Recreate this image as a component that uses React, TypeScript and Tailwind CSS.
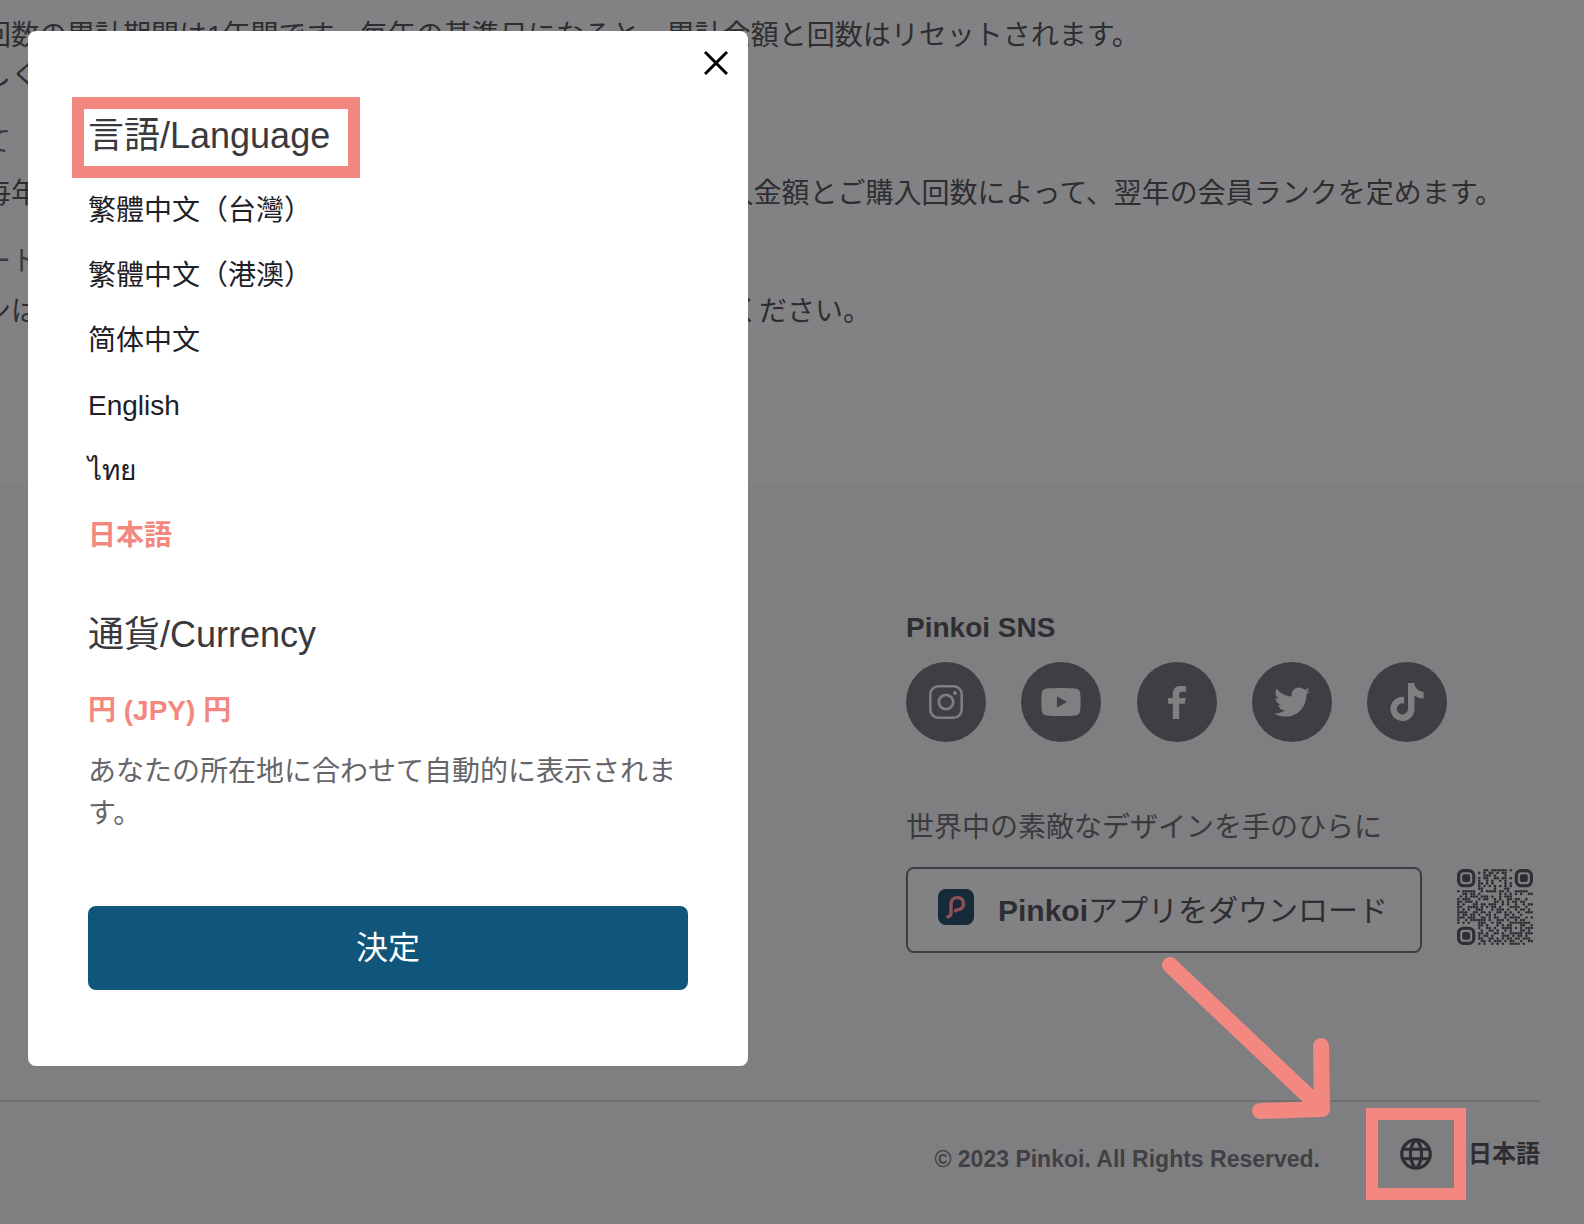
import { useState } from 'react';
import { FaTiktok, FaTwitter } from 'react-icons/fa6';
import { MdLanguage } from 'react-icons/md';

const languages = [
  { code: 'zh-TW', label: '繁體中文（台灣）' },
  { code: 'zh-HK', label: '繁體中文（港澳）' },
  { code: 'zh-CN', label: '简体中文' },
  { code: 'en', label: 'English' },
  { code: 'th', label: 'ไทย' },
  { code: 'ja', label: '日本語' },
];

// 29x29 modules, the three finder marks are drawn separately
const qrRows = [
  '..........##.######.#........',
  '........#.#.##.#.##..........',
  '..........###.#...#..........',
  '........#.##..##.##.#........',
  '........#..#.#..#.#..........',
  '........##.#.#....#.#........',
  '........#.#.#.#.#.#.#........',
  '........##....#...##.........',
  '#.#####..#.####.##.#..#####..',
  '..##.##.#.......#.#.#.#.#..##',
  '.#.#.###.###.#..#.###........',
  '#.###...#.##..#.#..##.##..#..',
  '##.###.#......##.#.#.##.##...',
  '#.#...##.##.###..#.#..#..#.##',
  '##..####.#.#.##.#...####..#..',
  '#.#.#..###...#.###.#..#.##.#.',
  '####..##.##.#..##.#.#..#..###',
  '#.##.##.#..##.#...##.#..#....',
  '###.###..##.#.##..#.####..#.#',
  '#..#.######.#..###.#..#.##...',
  '#.#.#...###..#.##...########.',
  '........##.#...#.#.##...##..#',
  '........#..##.#..####.#.#.###',
  '.........#..##.#..#.#...##.#.',
  '........##.#..##.#..#####.###',
  '........#.##.#...###.#.##.#..',
  '........##..##.#.#.##.##.###.',
  '.........##.#.###.#.##..#..##',
  '........#.#..#.#.#..####.#...',
];

function QrCode() {
  return (
    <svg viewBox="0 0 29 29" className="size-[76px] shrink-0" role="img" aria-label="QR">
      <g fill="#2e2e32">
        {qrRows.map((row, y) =>
          row.split('').map((cell, x) =>
            cell === '#' ? <circle key={`${x}-${y}`} cx={x + 0.5} cy={y + 0.5} r={0.5} /> : null
          )
        )}
      </g>
      {[[0, 0], [22, 0], [0, 22]].map(([x, y]) => (
        <g key={`${x}-${y}`}>
          <rect x={x + 0.6} y={y + 0.6} width="5.8" height="5.8" rx="1.9" fill="none" stroke="#2e2e32" strokeWidth="1.2" />
          <rect x={x + 2} y={y + 2} width="3" height="3" rx="0.8" fill="#2e2e32" />
        </g>
      ))}
    </svg>
  );
}

function InstagramIcon() {
  return (
    <svg viewBox="0 0 34 34" className="size-[34px]" fill="none" stroke="currentColor">
      <rect x="1.3" y="1.3" width="31.4" height="31.4" rx="8" strokeWidth="2.6" />
      <circle cx="17" cy="17" r="7.2" strokeWidth="2.8" />
      <circle cx="26" cy="8" r="2" fill="currentColor" stroke="none" />
    </svg>
  );
}

function YoutubeIcon() {
  return (
    <svg viewBox="0 0 40 28" className="h-7 w-10">
      <path
        fill="currentColor"
        fillRule="evenodd"
        d="M6 .6C14 -.1 26 -.1 34 .6c3.600.3 5 2 5.300 5.400.4 5.200.4 10.800 0 16-.3 3.400-1.700 5.100-5.300 5.400-8 .7-20 .7-28 0C2.400 27.100 1 25.400.7 22c-.4-5.200-.4-10.800 0-16C1 2.600 2.400.9 6 .6ZM16 8.500v11l10-5.500-10-5.500Z"
      />
    </svg>
  );
}

function FacebookIcon() {
  return (
    <svg viewBox="0 0 53 98" className="h-[33px] w-[18px]" fill="currentColor">
      <path d="M14 98V53H0V36h14V24C14 7 23 0 37 0h16v17H43c-7 0-10 2-10 9v10h19l-2 17H33v45Z" />
    </svg>
  );
}

function PinkoiLogo() {
  return (
    <svg viewBox="0 0 36 36" className="mb-1.5 size-9 shrink-0">
      <rect width="36" height="36" rx="8" fill="#172a3a" />
      <path
        d="M9.800 27.800c2.200-.5 3.200-1.900 3.200-4.400V15c0-3.800 2.600-6.400 6.300-6.400s6.200 2.500 6.200 6.100-2.500 6-5.900 6c-1 0-1.700.4-2 1.200"
        fill="none"
        stroke="#8f5254"
        strokeWidth="3.400"
        strokeLinecap="round"
      />
    </svg>
  );
}

const socials = [
  { name: 'Instagram', icon: <InstagramIcon /> },
  { name: 'YouTube', icon: <YoutubeIcon /> },
  { name: 'Facebook', icon: <FacebookIcon /> },
  { name: 'Twitter', icon: <FaTwitter className="size-9" /> },
  { name: 'TikTok', icon: <FaTiktok className="size-[38px]" /> },
];

function Article() {
  return (
    <main className="-ml-[17px] pt-4 pb-[150px] text-[28px] leading-10 whitespace-nowrap text-[#2e2e31]">
      <p>回数の累計期間は1年間です。毎年の基準日になると、累計金額と回数はリセットされます。</p>
      <p>しくはこちら</p>
      <h2 className="mt-[26px] text-[#3a3a3e]">て</h2>
      <p className="mt-3">
        毎年の基準日になると、その時点での過去1年間の累計ご購入金額とご購入回数によって、翌年の会員ランクを定めます。
      </p>
      <h2 className="mt-7 text-[#3a3a3e]">ートについて</h2>
      <p className="mt-[10px]">ンは、毎年1回更新されます。 詳しくは会員ページをご確認ください。</p>
    </main>
  );
}

function Footer() {
  return (
    <footer className="bg-[#7f7f81] pr-11 text-[#2e2e32]">
      <div className="flex justify-end pt-[126px] pb-[147px]">
        <div className="w-[634px]">
          <h3 className="text-[28px] leading-10 font-bold">Pinkoi SNS</h3>
          <div className="mt-[14px] flex max-w-[541px] justify-between">
            {socials.map((social) => (
              <a
                key={social.name}
                href="#"
                aria-label={social.name}
                className="flex size-20 items-center justify-center rounded-full bg-[#3f3e43] text-[#7f7f81]"
              >
                {social.icon}
              </a>
            ))}
          </div>
          <p className="mt-[66px] text-[28px] leading-10 text-[#3a3a3e]">世界中の素敵なデザインを手のひらに</p>
          <div className="mt-[19px] flex items-start gap-[35px]">
            <a
              href="#"
              className="flex h-[86px] flex-1 items-center gap-6 rounded-lg border-2 border-[#3f3e43] bg-[#828284] pl-[30px] text-[30px] whitespace-nowrap"
            >
              <PinkoiLogo />
              <span>
                <b>Pinkoi</b>アプリをダウンロード
              </span>
            </a>
            <div className="w-[83px] pt-0.5">
              <QrCode />
            </div>
          </div>
        </div>
      </div>

      <div className="flex items-center justify-end border-t-2 border-[#6f6f72] pt-[6px] pb-6">
        <small className="pt-[10px] pr-[46px] text-[23px] leading-8 font-bold text-[#414145]">
          © 2023 Pinkoi. All Rights Reserved.
        </small>
        <button type="button" className="relative flex items-center gap-0.5 text-2xl font-bold">
          <span className="flex h-[92px] w-[100px] items-center justify-center border-12 border-[#f28880]">
            <MdLanguage className="size-[38px]" />
          </span>
          日本語
          <svg
            viewBox="0 0 170 164"
            className="pointer-events-none absolute right-[210px] bottom-[81px] h-[164px] w-[170px]"
            fill="none"
            stroke="#f28880"
            strokeWidth="16"
            strokeLinecap="round"
            strokeLinejoin="round"
          >
            <path d="M10 10 161 153M161 91l1 63-62 2" />
          </svg>
        </button>
      </div>
    </footer>
  );
}

function LanguageDialog() {
  const [language, setLanguage] = useState('ja');

  return (
    <div
      role="dialog"
      aria-label="言語/Language"
      className="relative w-full max-w-[720px] rounded-lg bg-white px-[60px] pt-[66px] pb-[76px]"
    >
      <button type="button" aria-label="閉じる" className="absolute top-[18px] right-[18px] p-0.5">
        <svg viewBox="0 0 24 24" className="size-6" stroke="#000" strokeWidth="3">
          <path d="M1 1 23 23M23 1 1 23" />
        </svg>
      </button>

      <h2 className="-ml-4 w-72 border-12 border-[#f28880] px-1 pb-[3px] text-4xl leading-[54px] whitespace-nowrap text-[#39393e]">
        言語/Language
      </h2>
      <ul>
        {languages.map((item) => (
          <li key={item.code} className="flex h-[65px] items-center">
            <button
              type="button"
              lang={item.code}
              onClick={() => setLanguage(item.code)}
              className={
                language === item.code
                  ? 'text-[28px] leading-10 font-bold text-[#f28880]'
                  : 'text-[28px] leading-10 text-[#202026]'
              }
            >
              {item.label}
            </button>
          </li>
        ))}
      </ul>

      <h2 className="mt-[38px] text-4xl leading-[58px] text-[#39393e]">通貨/Currency</h2>
      <p className="mt-[27px] text-[28px] leading-10 font-bold text-[#f28880]">円 (JPY) 円</p>
      <p className="mt-5 text-[28px] leading-[42px] text-[#66666a]">
        あなたの所在地に合わせて自動的に表示されます。
      </p>
      <button type="button" className="mt-[71px] h-[84px] w-full rounded-lg bg-[#10567b] text-[32px] text-white">
        決定
      </button>
    </div>
  );
}

export default function App() {
  return (
    <div
      lang="ja"
      className="relative min-h-screen overflow-hidden bg-[#828284] font-['Liberation_Sans','Noto_Sans_CJK_JP',sans-serif]"
    >
      <Article />
      <Footer />
      <div className="absolute inset-0 px-7 pt-[31px]">
        <LanguageDialog />
      </div>
    </div>
  );
}
